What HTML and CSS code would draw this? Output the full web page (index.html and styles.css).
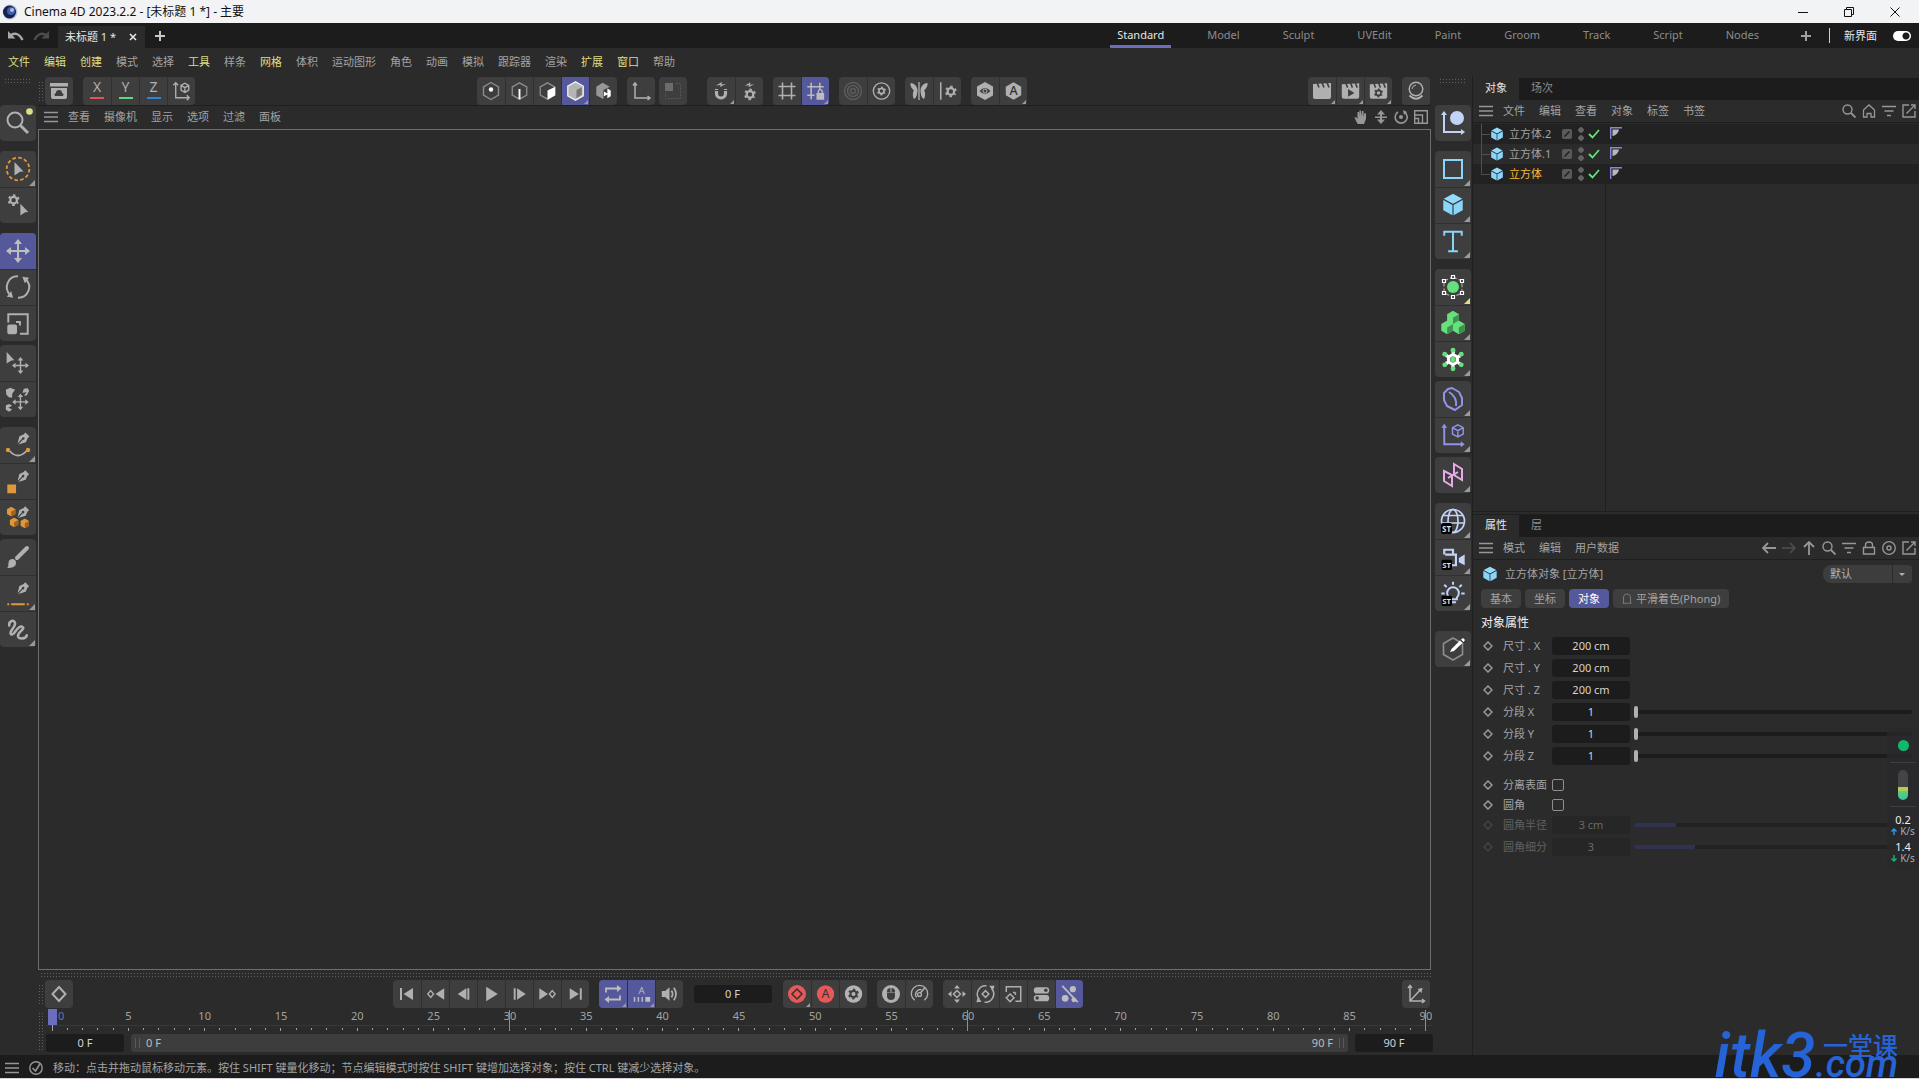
FILE: index.html
```html
<!DOCTYPE html>
<html lang="zh-CN">
<head>
    <meta charset="UTF-8">
    <meta name="viewport" content="width=device-width, initial-scale=1.0">
    <title>Cinema 4D 2023.2.2 - [未标题 1 *] - 主要</title>
    <link rel="stylesheet" href="styles.css">
</head>
<body>
    <!-- icon sprite -->
    <svg class="sprite" aria-hidden="true">
        <defs>
            <!-- shared shapes -->
            <symbol id="gear" viewBox="0 0 16 16">
                <circle cx="8" cy="8" r="4.2" fill="none" stroke="currentColor" stroke-width="2.8"/>
                <circle cx="8" cy="8" r="6.2" fill="none" stroke="currentColor" stroke-width="2.6" stroke-dasharray="3 3.49" stroke-dashoffset="1.5" transform="rotate(30 8 8)"/>
            </symbol>
            <symbol id="cube" viewBox="0 0 24 24">
                <path d="M12 1 21.5 6 12 11.2 2.5 6Z" fill="#93dbfd"/>
                <path d="M2 7.3 11.4 12.4V23L2 17.8ZM22 7.3 12.6 12.4V23L22 17.8Z" fill="#8ad6fb"/>
            </symbol>
            <symbol id="nib" viewBox="0 0 14 14">
                <path d="M9 .5 13.5 4.8 11.6 6.4 9.6 11 1.4 13.4 6.3 8.3A1.4 1.4 0 1 0 5.4 7.4L.6 12.5 2.6 4.6 7.4 2.4Z" fill="currentColor"/>
            </symbol>
            <symbol id="cross" viewBox="0 0 24 24">
                <path d="M12 2V22M2 12H22" stroke="currentColor" stroke-width="2"/>
                <path d="M12 0 16 5H8ZM12 24 8 19H16ZM0 12 5 8V16ZM24 12 19 16V8Z" fill="currentColor"/>
            </symbol>
            <symbol id="cursor" viewBox="0 0 10 14">
                <path d="M.5 0 9.5 9.5 6 9.8 .5 13.5Z" fill="currentColor"/>
            </symbol>
            <symbol id="hexa" viewBox="0 0 12 12">
                <path d="M6 0 11.2 3V9L6 12 .8 9V3Z" fill="#e0963b"/>
                <path d="M6 6 11.2 3V9L6 12Z" fill="#a0631c"/>
            </symbol>
            <symbol id="hexg" viewBox="0 0 12 12">
                <path d="M6 0 11.2 3V9L6 12 .8 9V3Z" fill="#66e07c"/>
                <path d="M6 6 11.2 3V9L6 12Z" fill="#3f9150"/>
            </symbol>

            <!-- 28px toolbar icons -->
            <symbol id="i-archive" viewBox="0 0 28 28"><path d="M5 6h18v3.500H5ZM6 11h16v9a2 2 0 0 1-2 2H8a2 2 0 0 1-2-2Z" fill="currentColor"/><path d="M10 19a2 2 0 0 1 1-3 3 3 0 0 1 6 0 2 2 0 0 1 1 3Z" fill="#3e3e3e"/></symbol>
            <symbol id="i-coord" viewBox="0 0 28 28"><g fill="none" stroke="currentColor" stroke-width="1.4"><path d="M8 5V21H22M5.500 8 8 5.500 10.500 8M19.500 18.500 22 21 19.500 23.500"/><path d="M17.500 6 21.500 8.300V13L17.500 15.500 13.500 13V8.300ZM13.500 8.300 17.500 10.500 21.500 8.300M17.500 10.500V15.500"/></g></symbol>
            <symbol id="i-point" viewBox="0 0 28 28"><path d="M14 5.500 21.500 9.800V18.200L14 22.500 6.500 18.200V9.800Z" fill="none" stroke="#8c8c8c" stroke-width="1.400"/><circle cx="14" cy="12.500" r="2.200" fill="#fff"/></symbol>
            <symbol id="i-edge" viewBox="0 0 28 28"><path d="M14 5.500 21.500 9.800V18.200L14 22.500 6.500 18.200V9.800Z" fill="none" stroke="#8c8c8c" stroke-width="1.400"/><path d="M14 12V22.500" stroke="#fff" stroke-width="2"/></symbol>
            <symbol id="i-poly" viewBox="0 0 28 28"><path d="M14 5.500 21.500 9.800V18.200L14 22.500 6.500 18.200V9.800Z" fill="none" stroke="#8c8c8c" stroke-width="1.400"/><path d="M14 13.500 22 9.500V18.500L14 23Z" fill="#fff"/></symbol>
            <symbol id="i-model" viewBox="0 0 28 28"><path d="M14 4.500 22 9V19L14 23.500 6 19V9Z" fill="#b4b4b4" stroke="#eee" stroke-width="1.400"/><path d="M15 13 20.500 10.200V18L15 21.500Z" fill="#777"/></symbol>
            <symbol id="i-uv" viewBox="0 0 28 28"><path d="M13 5.500 20.500 9.500 14 13V22.500L6.500 18.500V9.500Z" fill="#979797"/><path d="M18 11.500 21.500 13.500V19.500L18 21.500V17.500L14.500 19.500V14.500L18 16.500Z" fill="#fff"/></symbol>
            <symbol id="i-axis" viewBox="0 0 28 28"><path d="M8 6V21H23M6 8.500 8 6 10 8.500M20.500 19 23 21 20.500 23" fill="none" stroke="currentColor" stroke-width="1.500"/></symbol>
            <symbol id="i-plane" viewBox="0 0 28 28"><path d="M6 6h8v8H6Z" fill="#6c6c6c"/><path d="M17 6.500H21.500V21.500H6.500V16" fill="none" stroke="#555" stroke-dasharray="2 1"/></symbol>
            <symbol id="i-magnet" viewBox="0 0 28 28"><path d="M9.500 12V16.500A4.500 4.500 0 0 0 18.500 16.500V12" fill="none" stroke="currentColor" stroke-width="3.200"/><path d="M7.500 13.500H20.500" stroke="#3e3e3e"/><path d="M9 8.500 15 5 14.500 7.500 19 7 13 10 13.500 8Z" fill="currentColor"/></symbol>
            <symbol id="i-snapgear" viewBox="0 0 28 28"><use href="#gear" x="8" y="11" width="13" height="13"/><path d="M9 8.500 15 5 14.500 7.500 19 7 13 10 13.500 8Z" fill="currentColor"/></symbol>
            <symbol id="i-grid" viewBox="0 0 28 28"><path d="M9.500 5.500V22.500M18.500 5.500V22.500M5.500 9.500H22.500M5.500 18.500H22.500" stroke="currentColor" stroke-width="1.600"/></symbol>
            <symbol id="i-gridlock" viewBox="0 0 28 28"><path d="M9.500 5.500V22.500M18.500 5.500V12M5.500 9.500H22.500M5.500 18.500H13" stroke="currentColor" stroke-width="1.600"/><path d="M15 16h8v7h-8Z" fill="currentColor"/><path d="M17 16V14.500a2 2 0 0 1 4 0V16" fill="none" stroke="currentColor" stroke-width="1.400"/></symbol>
            <symbol id="i-rings" viewBox="0 0 28 28"><g fill="none" stroke="#5b5b5b" stroke-width="1.500"><circle cx="14" cy="14" r="8.500"/><circle cx="14" cy="14" r="5.500"/><circle cx="14" cy="14" r="2.500"/></g></symbol>
            <symbol id="i-ringgear" viewBox="0 0 28 28"><circle cx="14" cy="14" r="8.500" fill="none" stroke="currentColor" stroke-width="1.400"/><use href="#gear" x="9" y="9" width="10" height="10"/></symbol>
            <symbol id="i-mirror" viewBox="0 0 28 28"><path d="M14 5V23" stroke="currentColor" stroke-width="1.300"/><path d="M12.500 13C12 9 9 6 5.500 6 5 9 7 12 9 13.500 7.500 14.500 7.500 20 9 22 11.500 21 12.500 17 12.500 13ZM15.500 13C16 9 19 6 22.500 6 23 9 21 12 19 13.500 20.500 14.500 20.500 20 19 22 16.500 21 15.500 17 15.500 13Z" fill="currentColor"/></symbol>
            <symbol id="i-linegear" viewBox="0 0 28 28"><path d="M7 5V23" stroke="currentColor" stroke-width="1.600"/><use href="#gear" x="11" y="8" width="13" height="13"/></symbol>
            <symbol id="i-hexeye" viewBox="0 0 28 28"><path d="M14 5 22 9.500V18.500L14 23 6 18.500V9.500Z" fill="currentColor"/><path d="M8.500 14Q14 8 19.500 14 14 20 8.500 14Z" fill="#3e3e3e"/><circle cx="14" cy="14" r="2" fill="none" stroke="#b0b0b0"/></symbol>
            <symbol id="i-hexa" viewBox="0 0 28 28"><path d="M14 5 22 9.500V18.500L14 23 6 18.500V9.500Z" fill="currentColor"/><text x="14" y="18.500" text-anchor="middle" font-size="13" font-weight="500" fill="#333">A</text></symbol>
            <symbol id="i-clap" viewBox="0 0 28 28"><path d="M5 7 23 6V12H5Z" fill="currentColor"/><path d="M9 5.500 11 10.500M14 5.500 16 10.500M19 5.500 21 10.500" stroke="#3e3e3e" stroke-width="1.600"/><path d="M5 11H23V20a2 2 0 0 1-2 2H7a2 2 0 0 1-2-2Z" fill="currentColor"/></symbol>
            <symbol id="i-clapplay" viewBox="0 0 28 28"><use href="#i-clap"/><path d="M11.500 12 18 16 11.500 20Z" fill="#3e3e3e"/></symbol>
            <symbol id="i-clapgear" viewBox="0 0 28 28"><use href="#i-clap"/><use href="#gear" x="9" y="11" width="10" height="10" color="#3e3e3e"/></symbol>
            <symbol id="i-ball" viewBox="0 0 28 28"><g fill="none" stroke="currentColor" stroke-width="1.400"><circle cx="14" cy="12" r="6.800"/><path d="M10 12A4.500 4.500 0 0 1 14 8" stroke-width="1"/><path d="M7.500 18.500Q14 25 20.500 18.500" stroke-width="2"/></g></symbol>
            <symbol id="i-key" viewBox="0 0 28 28"><path d="M14 7 20.500 14 14 21 7.500 14Z" fill="none" stroke="currentColor" stroke-width="2"/></symbol>

            <!-- transport -->
            <symbol id="t-start" viewBox="0 0 28 28"><path d="M7 8h2v12H7ZM20 8V20L10.500 14Z" fill="currentColor"/></symbol>
            <symbol id="t-prevkey" viewBox="0 0 28 28"><path d="M23 8V20L14 14Z" fill="currentColor"/><path d="M9 10.500 12 14 9 17.500 6 14Z" fill="none" stroke="currentColor" stroke-width="1.400"/></symbol>
            <symbol id="t-prev" viewBox="0 0 28 28"><path d="M17 8V20L8 14ZM18 8h2v12h-2Z" fill="currentColor"/></symbol>
            <symbol id="t-play" viewBox="0 0 28 28"><path d="M8.500 6.500V21.500L20.500 14Z" fill="currentColor"/></symbol>
            <symbol id="t-next" viewBox="0 0 28 28"><path d="M8 8h2v12H8ZM11.500 8 20.500 14 11.500 20Z" fill="currentColor"/></symbol>
            <symbol id="t-nextkey" viewBox="0 0 28 28"><path d="M5.500 8 14.500 14 5.500 20Z" fill="currentColor"/><path d="M19 10.500 22 14 19 17.500 16 14Z" fill="none" stroke="currentColor" stroke-width="1.400"/></symbol>
            <symbol id="t-end" viewBox="0 0 28 28"><path d="M8 8 17.500 14 8 20ZM18.500 8h2v12h-2Z" fill="currentColor"/></symbol>
            <symbol id="t-loop" viewBox="0 0 28 28"><g fill="none" stroke="currentColor" stroke-width="1.800"><path d="M7 12.500V8.500H19M21 15.500V19.500H9"/></g><path d="M18 5 22.500 8.500 18 12ZM10 16 5.500 19.500 10 23Z" fill="currentColor"/></symbol>
            <symbol id="t-autoframes" viewBox="0 0 28 28"><text x="14" y="14" text-anchor="middle" font-size="10" fill="currentColor">A</text><path d="M6 17h1.500v5H6ZM10 17h1.500v5H10ZM14 17h1.500v5H14ZM18 17h5v5h-5Z" fill="currentColor"/></symbol>
            <symbol id="t-sound" viewBox="0 0 28 28"><path d="M6 11H9.500L14 7V21L9.500 17H6Z" fill="currentColor"/><path d="M16 10.500Q18.500 14 16 17.500M18.500 7.500Q23 14 18.500 20.500" fill="none" stroke="currentColor" stroke-width="1.800"/></symbol>
            <symbol id="t-rec" viewBox="0 0 28 28"><circle cx="14" cy="14" r="9" fill="#e55959"/><path d="M14 9 19 14 14 19 9 14Z" fill="none" stroke="#3e3030" stroke-width="1.500"/></symbol>
            <symbol id="t-auto" viewBox="0 0 28 28"><circle cx="14" cy="14" r="9" fill="#e55959"/><text x="14" y="18.500" text-anchor="middle" font-size="13" fill="#3e3030">A</text></symbol>
            <symbol id="t-gear" viewBox="0 0 28 28"><circle cx="14" cy="14" r="9" fill="#b4b4b4"/><use href="#gear" x="8" y="8" width="12" height="12" color="#3e3e3e"/></symbol>
            <symbol id="t-mouse" viewBox="0 0 28 28"><circle cx="14" cy="14" r="9" fill="currentColor"/><path d="M10 12.500H18V16a4 4 0 0 1-8 0ZM10 12V11a3.500 3.500 0 0 1 3.500-3V12ZM14.500 12V8A3.500 3.500 0 0 1 18 11V12Z" fill="#3e3e3e"/></symbol>
            <symbol id="t-speed" viewBox="0 0 28 28"><path d="M9 20.500A8.500 8.500 0 1 1 19 20.500M11 17.500A5 5 0 0 1 16 9.500" fill="none" stroke="currentColor" stroke-width="1.400"/><path d="M14 14 20 7" stroke="currentColor" stroke-width="1.600"/><circle cx="14" cy="14.500" r="2" fill="#3e3e3e" stroke="currentColor" stroke-width="1.400"/></symbol>
            <symbol id="t-pos" viewBox="0 0 28 28"><path d="M14 5 17 8.500H11ZM14 23 11 19.500H17ZM5 14 8.500 11V17ZM23 14 19.500 17V11Z" fill="currentColor"/><path d="M14 10.500 17.500 14 14 17.500 10.500 14Z" fill="none" stroke="currentColor" stroke-width="1.500"/></symbol>
            <symbol id="t-rot" viewBox="0 0 28 28"><path d="M7.500 19.500A8.500 8.500 0 0 1 15 5.600M20.500 8.500A8.500 8.500 0 0 1 13 22.400M14 10.500 17.500 14 14 17.500 10.500 14Z" fill="none" stroke="currentColor" stroke-width="1.500"/><path d="M18 5.500h5.500L21.500 11ZM4.500 22.500 6 17 10 22Z" fill="currentColor"/></symbol>
            <symbol id="t-scl" viewBox="0 0 28 28"><path d="M6.500 12V6.500H21.500V21.500H16M16 12.500H13.500M16 12.500V15M10.500 14 14.500 18 10.500 22 6.500 18Z" fill="none" stroke="currentColor" stroke-width="1.500"/></symbol>
            <symbol id="t-param" viewBox="0 0 28 28"><rect x="6" y="7" width="16" height="6.500" rx="3.200" fill="currentColor"/><rect x="6" y="15" width="16" height="6.500" rx="3.200" fill="currentColor"/><circle cx="18.500" cy="10.200" r="1.800" fill="#3e3e3e"/><circle cx="9.500" cy="18.200" r="1.800" fill="#3e3e3e"/></symbol>
            <symbol id="t-pla" viewBox="0 0 28 28"><path d="M6.500 5.500 22.500 22.500" stroke="currentColor" stroke-width="1.800"/><circle cx="17.500" cy="9" r="3.200" fill="currentColor"/><circle cx="9.500" cy="18.500" r="3.500" fill="currentColor"/><circle cx="18.500" cy="20" r="2.500" fill="currentColor"/></symbol>
            <symbol id="t-curve" viewBox="0 0 28 28"><path d="M8 6V21H22M8 21 19 9M6 8 8 5.500 10 8M20 19 22.500 21 20 23" fill="none" stroke="currentColor" stroke-width="1.500"/><path d="M15.500 9 20.500 8 19.500 13Z" fill="currentColor"/></symbol>

            <!-- 36px side icons -->
            <symbol id="s-search" viewBox="0 0 36 36"><circle cx="15" cy="15" r="7.500" fill="none" stroke="currentColor" stroke-width="2"/><path d="M20.500 20.500 28 28" stroke="currentColor" stroke-width="3"/><circle cx="29.500" cy="6.500" r="3.300" fill="#dede85"/></symbol>
            <symbol id="s-live" viewBox="0 0 36 36"><circle cx="18" cy="18" r="11.300" fill="none" stroke="#e0963b" stroke-width="1.800" stroke-dasharray="3.600 2.300"/><use href="#cursor" x="14" y="11" width="10" height="14"/></symbol>
            <symbol id="s-gearcur" viewBox="0 0 36 36"><use href="#gear" x="7" y="6" width="13" height="13"/><use href="#cursor" x="20" y="16" width="9" height="13"/></symbol>
            <symbol id="s-move" viewBox="0 0 36 36"><use href="#cross" x="6" y="6" width="24" height="24"/></symbol>
            <symbol id="s-rotate" viewBox="0 0 36 36"><path d="M10 25.500A11 11 0 0 1 18 6.500M26 9.500A11 11 0 0 1 18 28.500" fill="none" stroke="currentColor" stroke-width="2"/><path d="M22.500 7 29.500 8 25 13.500ZM6.500 27.500 11 21.500 13 28.500Z" fill="currentColor"/></symbol>
            <symbol id="s-scale" viewBox="0 0 36 36"><path d="M8 17V8.500H28V28.500H20M16 16.500H20V20" fill="none" stroke="currentColor" stroke-width="2"/><rect x="7" y="19" width="10" height="10" rx="2" fill="currentColor"/></symbol>
            <symbol id="s-curmove" viewBox="0 0 36 36"><use href="#cursor" x="6" y="7" width="9" height="12"/><use href="#cross" x="12" y="12" width="17" height="17"/></symbol>
            <symbol id="s-ptsmove" viewBox="0 0 36 36"><g fill="currentColor"><path d="M5.500 8 10 6 15 8 12 12 12 16 9 16 6 13ZM24 7 28 6.500 29.500 9 27 14 24 14 27 10.500 22.500 11ZM5.500 24 9 22.500 12 24.500 8 26.500 12 28 9 30.500 5.500 28.500Z"/></g><use href="#cross" x="12" y="12" width="17" height="17"/></symbol>
            <symbol id="s-spline" viewBox="0 0 36 36"><use href="#nib" x="17" y="5" width="13" height="13"/><path d="M9.500 24Q18 33 26.500 24" fill="none" stroke="currentColor" stroke-width="1.800"/><g fill="#e0963b"><circle cx="8" cy="23" r="2.200"/><circle cx="28" cy="23" r="2.200"/></g></symbol>
            <symbol id="s-pensq" viewBox="0 0 36 36"><use href="#nib" x="17" y="6" width="13" height="13"/><path d="M7 21h9v9H7Z" fill="#e0963b"/></symbol>
            <symbol id="s-penhex" viewBox="0 0 36 36"><use href="#nib" x="17" y="6" width="13" height="13"/><use href="#hexa" x="6" y="7" width="10" height="10"/><use href="#hexa" x="9" y="18" width="10" height="10"/><use href="#hexa" x="20" y="19" width="10" height="10"/></symbol>
            <symbol id="s-brush" viewBox="0 0 36 36"><path d="M27 9 17 19" stroke="currentColor" stroke-width="4" stroke-linecap="round"/><path d="M12 20a4 4 0 0 1 4 4c0 4-4 5-9 5 2-1 1-3 1.500-5A4 4 0 0 1 12 20Z" fill="currentColor"/></symbol>
            <symbol id="s-penline" viewBox="0 0 36 36"><use href="#nib" x="17" y="6" width="13" height="13"/><path d="M7 29h2M11 29H25M27 29h2" stroke="#e0963b" stroke-width="2"/></symbol>
            <symbol id="s-squig" viewBox="0 0 36 36"><path d="M9 14C8 9 15 7 15 12 15 16 8 21 11 23 14 25 17 14 22 15 27 17 17 21 18 25 19 28 26 28 27 24" fill="none" stroke="currentColor" stroke-width="2.600" stroke-linecap="round"/></symbol>
            <symbol id="s-null" viewBox="0 0 36 36"><path d="M9 8V27H28" fill="none" stroke="#c3d3f6" stroke-width="2"/><path d="M9 6 12 10H6ZM30 27 26 30V24Z" fill="#c3d3f6"/><circle cx="22" cy="13" r="7" fill="#c3d3f6"/></symbol>
            <symbol id="s-rect" viewBox="0 0 36 36"><path d="M9 9H27V27H9Z" fill="none" stroke="#8ad6fb" stroke-width="2"/></symbol>
            <symbol id="s-cube" viewBox="0 0 36 36"><use href="#cube" x="6" y="5" width="24" height="24"/></symbol>
            <symbol id="s-type" viewBox="0 0 36 36"><path d="M9 12V8H27V12M18 8V28M13 28H23" fill="none" stroke="#8ad6fb" stroke-width="2"/></symbol>
            <symbol id="s-subdiv" viewBox="0 0 36 36"><circle cx="18" cy="18" r="6" fill="#66e07c"/><path d="M18 8 27 12V24L18 28 9 24V12Z" fill="none" stroke="#aaa" stroke-width="1.200" stroke-dasharray="4 2"/><g fill="#3e3e3e" stroke="#fff" stroke-width="1.200"><path d="M16.500 6.500h3v3h-3ZM25.500 10.500h3v3h-3ZM25.500 22.500h3v3h-3ZM16.500 26.500h3v3h-3ZM7.500 22.500h3v3h-3ZM7.500 10.500h3v3h-3Z"/></g></symbol>
            <symbol id="s-cloner" viewBox="0 0 36 36"><use href="#hexg" x="11" y="5" width="14" height="14"/><use href="#hexg" x="5" y="15" width="14" height="14"/><use href="#hexg" x="17" y="15" width="14" height="14"/></symbol>
            <symbol id="s-fields" viewBox="0 0 36 36"><use href="#gear" x="9" y="9" width="18" height="18" color="#fff"/><g fill="#66e07c"><circle cx="18" cy="18" r="2.800"/><circle cx="18" cy="8.500" r="2.500"/><circle cx="26.500" cy="12.500" r="2.500"/><circle cx="26.500" cy="23.500" r="2.500"/><circle cx="18" cy="27.500" r="2.500"/><circle cx="9.500" cy="23.500" r="2.500"/><circle cx="9.500" cy="12.500" r="2.500"/></g></symbol>
            <symbol id="s-bend" viewBox="0 0 36 36"><path d="M9 12 13 8 17 7 24 11 27 17V24L20 29 12 25 9 19ZM14 11C19 14 22 18 21 25" fill="none" stroke="#9192ea" stroke-width="2" stroke-linejoin="round"/></symbol>
            <symbol id="s-axcube" viewBox="0 0 36 36"><g fill="none" stroke="#9192ea"><path d="M9 8V27H28" stroke-width="2"/><path d="M23 7 28.500 10V16.500L23 19.500 17.500 16.500V10ZM17.500 10 23 13 28.500 10M23 13V19.500" stroke-width="1.500"/></g><path d="M9 6 12 10H6ZM30 27 26 30V24Z" fill="#9192ea"/></symbol>
            <symbol id="s-sym" viewBox="0 0 36 36"><path d="M9 14 17 18V29L9 24ZM19 7 27 12V23L19 18ZM13 21 23 15" fill="none" stroke="#e9a9e8" stroke-width="2"/></symbol>
            <symbol id="st" viewBox="0 0 11 11"><rect width="11" height="11" rx="2" fill="#000"/><text x="5.500" y="8.800" text-anchor="middle" font-size="8" font-weight="700" fill="#ddd">ST</text></symbol>
            <symbol id="s-globe" viewBox="0 0 36 36"><g fill="none" stroke="#c3d3f6" stroke-width="1.700"><circle cx="18" cy="18" r="11.500"/><ellipse cx="18" cy="18" rx="5" ry="11.500"/><path d="M8 12.500H28M6.500 20H29.500"/></g><use href="#st" x="6" y="20" width="11" height="11"/></symbol>
            <symbol id="s-camera" viewBox="0 0 36 36"><path d="M9 15V10H18V14M10 15H21V26H14" fill="none" stroke="#c3d3f6" stroke-width="2.200"/><path d="M24 18.500 30 15V26L24 23Z" fill="#c3d3f6"/><use href="#st" x="6" y="20" width="11" height="11"/></symbol>
            <symbol id="s-light" viewBox="0 0 36 36"><g fill="none" stroke="#c3d3f6" stroke-width="2"><path d="M14 22A6 6 0 1 1 22 22V24H16M15 27H21M18 6V9M9 9 11.500 11.500M27 9 24.500 11.500M6 18H9.500M26.500 18H30"/></g><use href="#st" x="6" y="20" width="11" height="11"/></symbol>
            <symbol id="s-edit" viewBox="0 0 36 36"><path d="M18 7 27.500 12.500V23.500L18 29 8.500 23.500V12.500Z" fill="none" stroke="#8c8c8c" stroke-width="1.700"/><path d="M15 21 16.500 18 25 9.500 27.500 12 19 20 15 21ZM26 8.500 28 7 30 9 28.500 11Z" fill="#fff"/></symbol>

            <!-- 14px panel icons -->
            <symbol id="p-burger" viewBox="0 0 14 14"><path d="M0 2.500H14M0 7H14M0 11.500H14" stroke="currentColor" stroke-width="1.600"/></symbol>
            <symbol id="p-search" viewBox="0 0 14 14"><circle cx="5.500" cy="5.500" r="4.500" fill="none" stroke="currentColor" stroke-width="1.400"/><path d="M9 9 13.500 13.500" stroke="currentColor" stroke-width="1.800"/></symbol>
            <symbol id="p-home" viewBox="0 0 14 14"><path d="M1.500 13V6L7 1 12.500 6V13H9V9.500H5V13Z" fill="none" stroke="currentColor" stroke-width="1.300"/></symbol>
            <symbol id="p-filter" viewBox="0 0 14 14"><path d="M0 2.500H14M2.500 7H11.500M5 11.500H9" stroke="currentColor" stroke-width="1.500"/></symbol>
            <symbol id="p-ext" viewBox="0 0 14 14"><path d="M7 1H1V13H13V7M4.500 9.500 12 2M9 1H13V5" fill="none" stroke="currentColor" stroke-width="1.400"/></symbol>
            <symbol id="p-left" viewBox="0 0 14 14"><path d="M6 2 1 7 6 12M1 7H14" fill="none" stroke="currentColor" stroke-width="1.800"/></symbol>
            <symbol id="p-right" viewBox="0 0 14 14"><path d="M8 2 13 7 8 12M13 7H0" fill="none" stroke="currentColor" stroke-width="1.500"/></symbol>
            <symbol id="p-up" viewBox="0 0 14 14"><path d="M2 6 7 1 12 6M7 1V14" fill="none" stroke="currentColor" stroke-width="1.800"/></symbol>
            <symbol id="p-lock" viewBox="0 0 14 14"><path d="M1.500 6.500H12.500V13H1.500ZM3.500 6.500V4a3.500 3 0 0 1 7 0V6.500" fill="none" stroke="currentColor" stroke-width="1.400"/></symbol>
            <symbol id="p-target" viewBox="0 0 14 14"><circle cx="7" cy="7" r="6.300" fill="none" stroke="currentColor" stroke-width="1.300"/><circle cx="7" cy="7" r="2" fill="none" stroke="currentColor" stroke-width="1.400"/></symbol>
            <symbol id="p-hand" viewBox="0 0 14 14"><path d="M3 13 .5 7.500 2 7 3.500 9V2H5V6.500L5.500.5H7V6.500L8 1H9.500V7L10.500 3 12 3.500V9L10 14H4Z" fill="currentColor"/></symbol>
            <symbol id="p-dolly" viewBox="0 0 14 14"><path d="M7 0 11 4.500H8V6.500H13V8H8V9.500H11L7 14 3 9.500H6V8H1V6.500H6V4.500H3Z" fill="currentColor"/></symbol>
            <symbol id="p-orbit" viewBox="0 0 14 14"><path d="M4 2A6 6 0 1 0 10 1.800" fill="none" stroke="currentColor" stroke-width="1.600"/><path d="M9 0 13 2 10 5Z" fill="currentColor"/><circle cx="7" cy="7" r="2" fill="currentColor"/></symbol>
            <symbol id="p-max" viewBox="0 0 14 14"><path d="M.7.7H13.300V13.300H.7ZM.7 5H8.500V13.300M4.500 13.300V8.500H.7" fill="none" stroke="currentColor" stroke-width="1.400"/></symbol>
            <symbol id="p-undo" viewBox="0 0 16 12"><path d="M3 5Q10 1 14.500 10" fill="none" stroke="currentColor" stroke-width="2.400"/><path d="M0 1V8.500H7.500Z" fill="currentColor"/></symbol>
            <symbol id="p-diamond" viewBox="0 0 10 10"><path d="M5 1 9 5 5 9 1 5Z" fill="none" stroke="currentColor" stroke-width="1.500"/></symbol>
            <symbol id="p-check" viewBox="0 0 12 10"><path d="M1 5 4.500 8.500 11 1" fill="none" stroke="#66e07c" stroke-width="1.800"/></symbol>
            <symbol id="p-layer" viewBox="0 0 10 10"><rect width="10" height="10" rx="2" fill="#5a5a5a"/><path d="M2.500 7.500 7.500 2.500" stroke="#222" stroke-width="1.600"/></symbol>
            <symbol id="p-tag" viewBox="0 0 12 12"><path d="M.7 12V.7H12" fill="none" stroke="#8486d8" stroke-width="1.400"/><path d="M2.500 2.500H9C8.500 5.500 6 8.500 2.500 9Z" fill="#b8b8b8"/></symbol>
            <symbol id="p-phong" viewBox="0 0 10 11"><path d="M.5 10.300H9.500M1.500 10V5a3.500 4 0 0 1 7 0V10" fill="none" stroke="#777" stroke-width="1.100"/></symbol>
            <symbol id="p-ok" viewBox="0 0 14 14"><circle cx="7" cy="7" r="6.200" fill="none" stroke="currentColor" stroke-width="1.400"/><path d="M3.500 7 6.500 10 11.500 2" fill="none" stroke="currentColor" stroke-width="1.500"/></symbol>
        </defs>
    </svg>

    <header class="titlebar">
        <svg class="app-icon" viewBox="0 0 16 16"><circle cx="8" cy="8" r="7.500" fill="#bfc6d8"/><circle cx="7.500" cy="8" r="6.500" fill="#14204d"/><circle cx="9" cy="7" r="4" fill="#3e5fa8"/><circle cx="10" cy="6" r="2" fill="#a9bde6"/></svg>
        <h1 class="app-title">Cinema 4D 2023.2.2 - [未标题 1 *] - 主要</h1>
        <div class="window-controls">
            <button aria-label="最小化"><svg viewBox="0 0 10 10"><path d="M0 5.500H10" stroke="#111"/></svg></button>
            <button aria-label="还原"><svg viewBox="0 0 10 10"><path d="M.5 2.500H7.500V9.500H.5ZM2.500 2V.5H9.500V7.500H8" fill="none" stroke="#111"/></svg></button>
            <button aria-label="关闭"><svg viewBox="0 0 10 10"><path d="M.5.5 9.500 9.500M9.500.5.5 9.500" stroke="#111"/></svg></button>
        </div>
    </header>

    <div class="docbar">
        <button class="history" aria-label="撤销"><svg><use href="#p-undo"/></svg></button>
        <button class="history redo" aria-label="重做" disabled><svg><use href="#p-undo"/></svg></button>
        <div class="doc-tab"><span>未标题 1 *</span><button class="tab-close" aria-label="关闭标签"><svg viewBox="0 0 8 8"><path d="M1 1 7 7M7 1 1 7" stroke="currentColor" stroke-width="1.600"/></svg></button></div>
        <button class="plus" aria-label="新建"><svg viewBox="0 0 10 10"><path d="M5 0V10M0 5H10" stroke="currentColor" stroke-width="2"/></svg></button>
        <nav class="layouts">
            <button class="active">Standard</button>
            <button>Model</button>
            <button>Sculpt</button>
            <button>UVEdit</button>
            <button>Paint</button>
            <button>Groom</button>
            <button>Track</button>
            <button>Script</button>
            <button>Nodes</button>
        </nav>
        <button class="plus dim" aria-label="添加布局"><svg viewBox="0 0 10 10"><path d="M5 0V10M0 5H10" stroke="currentColor" stroke-width="2"/></svg></button>
        <label class="new-ui">新界面 <input type="checkbox" class="switch" checked></label>
    </div>

    <nav class="menubar">
        <button class="hl">文件</button>
        <button class="hl">编辑</button>
        <button class="hl">创建</button>
        <button>模式</button>
        <button>选择</button>
        <button class="hl">工具</button>
        <button>样条</button>
        <button class="hl">网格</button>
        <button>体积</button>
        <button>运动图形</button>
        <button>角色</button>
        <button>动画</button>
        <button>模拟</button>
        <button>跟踪器</button>
        <button>渲染</button>
        <button class="hl">扩展</button>
        <button class="hl">窗口</button>
        <button>帮助</button>
    </nav>

    <main class="main">
        <div class="work">
            <div class="toolbar">
                <div class="grip-h"></div>
                <div class="grip-v"></div>
                <div class="toolbar-part">
                    <div class="group"><button class="tool" aria-label="资产"><svg><use href="#i-archive"/></svg></button></div>
                    <div class="group">
                        <button class="tool axis x">X</button>
                        <button class="tool axis y">Y</button>
                        <button class="tool axis z">Z</button>
                        <button class="tool" aria-label="坐标系统"><svg><use href="#i-coord"/></svg></button>
                    </div>
                </div>
                <div class="toolbar-part mid">
                    <div class="group">
                        <button class="tool" aria-label="点"><svg><use href="#i-point"/></svg></button>
                        <button class="tool" aria-label="边"><svg><use href="#i-edge"/></svg></button>
                        <button class="tool" aria-label="多边形"><svg><use href="#i-poly"/></svg></button>
                        <button class="tool on more" aria-label="模型"><svg><use href="#i-model"/></svg></button>
                        <button class="tool" aria-label="纹理"><svg><use href="#i-uv"/></svg></button>
                    </div>
                    <div class="group"><button class="tool" aria-label="启用轴心"><svg><use href="#i-axis"/></svg></button></div>
                    <div class="group near"><button class="tool" aria-label="视窗独显"><svg><use href="#i-plane"/></svg></button></div>
                    <div class="group far">
                        <button class="tool more" aria-label="捕捉"><svg><use href="#i-magnet"/></svg></button>
                        <button class="tool" aria-label="捕捉设置"><svg><use href="#i-snapgear"/></svg></button>
                    </div>
                    <div class="group">
                        <button class="tool" aria-label="工作平面"><svg><use href="#i-grid"/></svg></button>
                        <button class="tool on more" aria-label="锁定工作平面"><svg><use href="#i-gridlock"/></svg></button>
                    </div>
                    <div class="group">
                        <button class="tool" aria-label="软选择"><svg><use href="#i-rings"/></svg></button>
                        <button class="tool" aria-label="软选择设置"><svg><use href="#i-ringgear"/></svg></button>
                    </div>
                    <div class="group">
                        <button class="tool" aria-label="对称"><svg><use href="#i-mirror"/></svg></button>
                        <button class="tool" aria-label="对称设置"><svg><use href="#i-linegear"/></svg></button>
                    </div>
                    <div class="group">
                        <button class="tool" aria-label="视窗单体"><svg><use href="#i-hexeye"/></svg></button>
                        <button class="tool more" aria-label="自动单体"><svg><use href="#i-hexa"/></svg></button>
                    </div>
                </div>
                <div class="toolbar-part end">
                    <div class="group">
                        <button class="tool more" aria-label="渲染活动视图"><svg><use href="#i-clap"/></svg></button>
                        <button class="tool more" aria-label="渲染到图像查看器"><svg><use href="#i-clapplay"/></svg></button>
                        <button class="tool more" aria-label="编辑渲染设置"><svg><use href="#i-clapgear"/></svg></button>
                    </div>
                    <div class="group"><button class="tool" aria-label="材质"><svg><use href="#i-ball"/></svg></button></div>
                </div>
                <div class="grip-h"></div>
            </div>

            <div class="stage">
                <aside class="side-tools">
                    <div class="group"><button class="tool" aria-label="搜索"><svg><use href="#s-search"/></svg></button></div>
                    <div class="group">
                        <button class="tool more" aria-label="实时选择"><svg><use href="#s-live"/></svg></button>
                        <button class="tool" aria-label="选择设置"><svg><use href="#s-gearcur"/></svg></button>
                    </div>
                    <div class="group">
                        <button class="tool on" aria-label="移动"><svg><use href="#s-move"/></svg></button>
                        <button class="tool" aria-label="旋转"><svg><use href="#s-rotate"/></svg></button>
                        <button class="tool" aria-label="缩放"><svg><use href="#s-scale"/></svg></button>
                    </div>
                    <div class="group near">
                        <button class="tool" aria-label="放置"><svg><use href="#s-curmove"/></svg></button>
                        <button class="tool" aria-label="动态放置"><svg><use href="#s-ptsmove"/></svg></button>
                    </div>
                    <div class="group">
                        <button class="tool more" aria-label="样条画笔"><svg><use href="#s-spline"/></svg></button>
                        <button class="tool" aria-label="多边形画笔"><svg><use href="#s-pensq"/></svg></button>
                        <button class="tool" aria-label="体积画笔"><svg><use href="#s-penhex"/></svg></button>
                    </div>
                    <div class="group near">
                        <button class="tool" aria-label="笔刷"><svg><use href="#s-brush"/></svg></button>
                        <button class="tool more" aria-label="涂鸦"><svg><use href="#s-penline"/></svg></button>
                        <button class="tool more" aria-label="草绘"><svg><use href="#s-squig"/></svg></button>
                    </div>
                </aside>

                <div class="center">
                    <div class="view-menu">
                        <svg class="ico"><use href="#p-burger"/></svg>
                        <button>查看</button>
                        <button>摄像机</button>
                        <button>显示</button>
                        <button>选项</button>
                        <button>过滤</button>
                        <button>面板</button>
                        <div class="icons">
                            <svg class="ico"><use href="#p-hand"/></svg>
                            <svg class="ico"><use href="#p-dolly"/></svg>
                            <svg class="ico"><use href="#p-orbit"/></svg>
                            <svg class="ico"><use href="#p-max"/></svg>
                        </div>
                    </div>
                    <div class="viewport"></div>

                    <section class="timeline">
                        <div class="grip-wide"></div>
                        <div class="transport">
                            <div class="grip-v"></div>
                            <div class="group"><button class="tool" aria-label="关键帧"><svg><use href="#i-key"/></svg></button></div>
                            <div class="transport-mid">
                                <div class="group">
                                    <button class="tool" aria-label="转到开始"><svg><use href="#t-start"/></svg></button>
                                    <button class="tool" aria-label="上一关键帧"><svg><use href="#t-prevkey"/></svg></button>
                                    <button class="tool" aria-label="上一帧"><svg><use href="#t-prev"/></svg></button>
                                    <button class="tool" aria-label="播放"><svg><use href="#t-play"/></svg></button>
                                    <button class="tool" aria-label="下一帧"><svg><use href="#t-next"/></svg></button>
                                    <button class="tool" aria-label="下一关键帧"><svg><use href="#t-nextkey"/></svg></button>
                                    <button class="tool" aria-label="转到结束"><svg><use href="#t-end"/></svg></button>
                                </div>
                                <div class="group">
                                    <button class="tool on more" aria-label="循环"><svg><use href="#t-loop"/></svg></button>
                                    <button class="tool on more" aria-label="全部帧"><svg><use href="#t-autoframes"/></svg></button>
                                    <button class="tool" aria-label="声音"><svg><use href="#t-sound"/></svg></button>
                                </div>
                                <input class="field now" type="text" value="0 F" aria-label="当前帧">
                                <div class="group">
                                    <button class="tool more" aria-label="记录"><svg><use href="#t-rec"/></svg></button>
                                    <button class="tool" aria-label="自动关键帧"><svg><use href="#t-auto"/></svg></button>
                                    <button class="tool" aria-label="关键帧设置"><svg><use href="#t-gear"/></svg></button>
                                </div>
                                <div class="group">
                                    <button class="tool" aria-label="鼠标记录"><svg><use href="#t-mouse"/></svg></button>
                                    <button class="tool" aria-label="速率"><svg><use href="#t-speed"/></svg></button>
                                </div>
                                <div class="group">
                                    <button class="tool" aria-label="位置"><svg><use href="#t-pos"/></svg></button>
                                    <button class="tool" aria-label="旋转"><svg><use href="#t-rot"/></svg></button>
                                    <button class="tool" aria-label="缩放"><svg><use href="#t-scl"/></svg></button>
                                    <button class="tool" aria-label="参数"><svg><use href="#t-param"/></svg></button>
                                    <button class="tool on" aria-label="点级别动画"><svg><use href="#t-pla"/></svg></button>
                                </div>
                            </div>
                            <div class="group"><button class="tool" aria-label="函数曲线"><svg><use href="#t-curve"/></svg></button></div>
                        </div>
                        <div class="frames">
                            <div class="grip-v"></div>
                            <div class="frames-body">
                                <div class="ruler" id="ruler"></div>
                                <div class="range">
                                    <input class="field" type="text" value="0 F" aria-label="起始帧">
                                    <div class="range-bar"><i></i><span>0 F</span><span class="last">90 F</span><i></i></div>
                                    <input class="field" type="text" value="90 F" aria-label="结束帧">
                                </div>
                            </div>
                        </div>
                    </section>
                </div>

                <aside class="side-tools right">
                    <div class="group"><button class="tool" aria-label="空白"><svg><use href="#s-null"/></svg></button></div>
                    <div class="group">
                        <button class="tool more" aria-label="矩形"><svg><use href="#s-rect"/></svg></button>
                        <button class="tool more" aria-label="立方体"><svg><use href="#s-cube"/></svg></button>
                        <button class="tool more" aria-label="文本"><svg><use href="#s-type"/></svg></button>
                    </div>
                    <div class="group">
                        <button class="tool more warm" aria-label="细分曲面"><svg><use href="#s-subdiv"/></svg></button>
                        <button class="tool more" aria-label="克隆"><svg><use href="#s-cloner"/></svg></button>
                        <button class="tool more" aria-label="效果器"><svg><use href="#s-fields"/></svg></button>
                    </div>
                    <div class="group near">
                        <button class="tool more" aria-label="弯曲"><svg><use href="#s-bend"/></svg></button>
                        <button class="tool more" aria-label="域"><svg><use href="#s-axcube"/></svg></button>
                    </div>
                    <div class="group near"><button class="tool more" aria-label="对称"><svg><use href="#s-sym"/></svg></button></div>
                    <div class="group">
                        <button class="tool more" aria-label="天空"><svg><use href="#s-globe"/></svg></button>
                        <button class="tool more" aria-label="摄像机"><svg><use href="#s-camera"/></svg></button>
                        <button class="tool more" aria-label="灯光"><svg><use href="#s-light"/></svg></button>
                    </div>
                    <div class="group far"><button class="tool more" aria-label="转为可编辑"><svg><use href="#s-edit"/></svg></button></div>
                </aside>
            </div>
        </div>

        <div class="panels">
            <section class="panel objects">
                <div class="panel-tabs"><button class="active">对象</button><button>场次</button></div>
                <div class="panel-menu">
                    <svg class="ico"><use href="#p-burger"/></svg>
                    <button>文件</button>
                    <button>编辑</button>
                    <button>查看</button>
                    <button>对象</button>
                    <button>标签</button>
                    <button>书签</button>
                    <div class="icons">
                        <svg class="ico"><use href="#p-search"/></svg>
                        <svg class="ico"><use href="#p-home"/></svg>
                        <svg class="ico"><use href="#p-filter"/></svg>
                        <svg class="ico"><use href="#p-ext"/></svg>
                    </div>
                </div>
                <ul class="tree">
                    <li><span class="branch"></span><svg class="ico"><use href="#cube"/></svg><span class="name">立方体.2</span><svg class="layer"><use href="#p-layer"/></svg><span class="dots"></span><svg class="check"><use href="#p-check"/></svg><svg class="tag"><use href="#p-tag"/></svg></li>
                    <li><span class="branch"></span><svg class="ico"><use href="#cube"/></svg><span class="name">立方体.1</span><svg class="layer"><use href="#p-layer"/></svg><span class="dots"></span><svg class="check"><use href="#p-check"/></svg><svg class="tag"><use href="#p-tag"/></svg></li>
                    <li class="selected"><span class="branch"></span><svg class="ico"><use href="#cube"/></svg><span class="name">立方体</span><svg class="layer"><use href="#p-layer"/></svg><span class="dots"></span><svg class="check"><use href="#p-check"/></svg><svg class="tag"><use href="#p-tag"/></svg></li>
                </ul>
                <div class="tree-rest"></div>
            </section>

            <section class="panel attrs">
                <div class="panel-tabs"><button class="active">属性</button><button>层</button></div>
                <div class="panel-menu">
                    <svg class="ico"><use href="#p-burger"/></svg>
                    <button>模式</button>
                    <button>编辑</button>
                    <button>用户数据</button>
                    <div class="icons">
                        <svg class="ico"><use href="#p-left"/></svg>
                        <svg class="ico off"><use href="#p-right"/></svg>
                        <svg class="ico"><use href="#p-up"/></svg>
                        <svg class="ico"><use href="#p-search"/></svg>
                        <svg class="ico"><use href="#p-filter"/></svg>
                        <svg class="ico"><use href="#p-lock"/></svg>
                        <svg class="ico"><use href="#p-target"/></svg>
                        <svg class="ico"><use href="#p-ext"/></svg>
                    </div>
                </div>
                <div class="attr-body">
                    <div class="attr-head">
                        <svg class="cube"><use href="#cube"/></svg>
                        <span>立方体对象 [立方体]</span>
                        <div class="preset"><select aria-label="预设"><option>默认</option></select></div>
                    </div>
                    <div class="attr-tabs">
                        <button>基本</button>
                        <button>坐标</button>
                        <button class="active">对象</button>
                        <button><svg><use href="#p-phong"/></svg>平滑着色(Phong)</button>
                    </div>
                    <h2>对象属性</h2>
                    <div class="row"><svg class="key"><use href="#p-diamond"/></svg><label for="sx">尺寸 . X</label><input id="sx" class="field" type="text" value="200 cm"></div>
                    <div class="row"><svg class="key"><use href="#p-diamond"/></svg><label for="sy">尺寸 . Y</label><input id="sy" class="field" type="text" value="200 cm"></div>
                    <div class="row"><svg class="key"><use href="#p-diamond"/></svg><label for="sz">尺寸 . Z</label><input id="sz" class="field" type="text" value="200 cm"></div>
                    <div class="row"><svg class="key"><use href="#p-diamond"/></svg><label for="gx">分段 X</label><input id="gx" class="field" type="text" value="1"><input class="slider" type="range" min="1" max="100" value="1" aria-label="分段 X"></div>
                    <div class="row"><svg class="key"><use href="#p-diamond"/></svg><label for="gy">分段 Y</label><input id="gy" class="field" type="text" value="1"><input class="slider" type="range" min="1" max="100" value="1" aria-label="分段 Y"></div>
                    <div class="row"><svg class="key"><use href="#p-diamond"/></svg><label for="gz">分段 Z</label><input id="gz" class="field" type="text" value="1"><input class="slider" type="range" min="1" max="100" value="1" aria-label="分段 Z"></div>
                    <div class="checks">
                        <div class="row"><svg class="key"><use href="#p-diamond"/></svg><label for="sep">分离表面</label><input id="sep" type="checkbox" class="box"></div>
                        <div class="row"><svg class="key"><use href="#p-diamond"/></svg><label for="fil">圆角</label><input id="fil" type="checkbox" class="box"></div>
                    </div>
                    <div class="row disabled"><svg class="key"><use href="#p-diamond"/></svg><label for="fr">圆角半径</label><input id="fr" class="field" type="text" value="3 cm" disabled><input class="slider" type="range" value="15" style="--fill: 15%" aria-label="圆角半径" disabled></div>
                    <div class="row disabled"><svg class="key"><use href="#p-diamond"/></svg><label for="fs">圆角细分</label><input id="fs" class="field" type="text" value="3" disabled><input class="slider" type="range" value="22" style="--fill: 22%" aria-label="圆角细分" disabled></div>
                </div>
            </section>
        </div>
    </main>

    <footer class="status">
        <svg class="ico"><use href="#p-burger"/></svg>
        <svg class="ico"><use href="#p-ok"/></svg>
        <span>移动：点击并拖动鼠标移动元素。按住 SHIFT 键量化移动；节点编辑模式时按住 SHIFT 键增加选择对象；按住 CTRL 键减少选择对象。</span>
    </footer>

    <!-- floating network monitor -->
    <div class="netmon">
        <span class="led"></span>
        <span class="meter"></span>
        <div class="rate"><b>0.2</b><span><svg class="arrow up" viewBox="0 0 6 7"><path d="M3 7V1M.5 3.500 3 1 5.500 3.500" fill="none" stroke="currentColor" stroke-width="1.400"/></svg>K/s</span></div>
        <div class="rate"><b>1.4</b><span><svg class="arrow down" viewBox="0 0 6 7"><path d="M3 0V6M.5 3.500 3 6 5.500 3.500" fill="none" stroke="currentColor" stroke-width="1.400"/></svg>K/s</span></div>
    </div>

    <div class="watermark">
        <span class="wm-main">itk3</span>
        <span class="wm-side"><span class="wm-cn">一堂课</span><span class="wm-com">.com</span></span>
    </div>

    <script src="script.js"></script>
</body>
</html>
```
FILE: styles.css
```css
:root {
    --bg: #2b2b2b;
    --dark: #1c1c1c;
    --btn: #3e3e3e;
    --line: #1f1f1f;
    --icon: #b0b0b0;
    --text: #a3a3a3;
    --bright: #e6e6e6;
    --accent: #55599c;
    --yellow: #dede85;
}

* {
    box-sizing: border-box;
}

body {
    margin: 0;
    height: 100vh;
    display: flex;
    flex-direction: column;
    overflow: hidden;
    background: var(--bg);
    color: var(--text);
    font: 11px/16px "Noto Sans", "Noto Sans CJK SC", sans-serif;
}

button, input, select {
    font: inherit;
    color: inherit;
    margin: 0;
    padding: 0;
    border: 0;
    background: none;
}

svg {
    display: block;
    flex: none;
}

.sprite {
    position: absolute;
    width: 0;
    height: 0;
}

.ico {
    width: 14px;
    height: 14px;
    color: #979797;
}

.ico.off {
    color: #505050;
}

/* title bar */
.titlebar {
    display: flex;
    align-items: center;
    height: 23px;
    padding: 0 1px 0 2px;
    background: #f2f3f5;
    color: #111;
}

.app-icon {
    width: 16px;
    height: 16px;
}

.app-title {
    margin: 0 auto 0 6px;
    font-size: 12px;
    font-weight: 400;
}

.window-controls {
    display: flex;
}

.window-controls button {
    width: 46px;
    height: 22px;
    display: grid;
    place-items: center;
}

.window-controls svg {
    width: 10px;
    height: 10px;
}

/* document tabs + layouts */
.docbar {
    display: flex;
    align-items: center;
    height: 25px;
    padding: 0 8px;
    background: var(--dark);
}

.history {
    margin-right: 9px;
    color: #a8a8a8;
}

.history svg {
    width: 16px;
    height: 12px;
}

.history.redo {
    transform: scaleX(-1);
    color: #4d4d4d;
    margin-right: 9px;
}

.doc-tab {
    align-self: flex-end;
    display: flex;
    align-items: center;
    justify-content: space-between;
    width: 87px;
    height: 22px;
    padding: 0 8px 1px 7px;
    background: var(--bg);
    color: var(--bright);
}

.tab-close svg {
    width: 8px;
    height: 8px;
}

.plus {
    margin-left: 10px;
    color: #c8c8c8;
}

.plus.dim {
    margin: 0 18px 0 0;
    color: #a0a0a0;
}

.plus svg {
    width: 10px;
    height: 10px;
}

.layouts {
    display: flex;
    align-self: stretch;
    gap: 29px;
    margin: 0 35px 0 auto;
}

.layouts button {
    padding: 2px 7px 0;
    color: #8c8c8c;
    border-bottom: 3px solid transparent;
}

.layouts .active {
    color: var(--bright);
    border-color: #6b6fbb;
}

.new-ui {
    display: flex;
    align-items: center;
    gap: 16px;
    padding-left: 14px;
    border-left: 1px solid #d0d0d0;
    color: var(--bright);
    line-height: 15px;
}

.switch {
    appearance: none;
    width: 18px;
    height: 10px;
    border-radius: 5px;
    background: radial-gradient(circle at 13px 5px, #1c1c1c 3px, #fff 4px);
}

/* main menu */
.menubar {
    display: flex;
    align-items: center;
    gap: 14px;
    height: 28px;
    padding: 0 8px;
}

.menubar .hl {
    color: var(--yellow);
}

/* shared tool buttons */
.group {
    display: flex;
    flex: none;
    border-radius: 4px;
    background: var(--btn);
    overflow: hidden;
}

.tool {
    position: relative;
    width: 28px;
    height: 28px;
    color: var(--icon);
}

.tool svg {
    width: 100%;
    height: 100%;
}

.tool + .tool {
    border-left: 1px solid #303030;
}

.tool.on {
    background: var(--accent);
    color: #bdbdbd;
}

.more::after {
    content: "";
    position: absolute;
    right: 1px;
    bottom: 1px;
    border: 2px solid #9a9a9a;
    border-top-color: transparent;
    border-left-color: transparent;
}

.more.warm::after {
    border-right-color: var(--yellow);
    border-bottom-color: var(--yellow);
}

.grip-h {
    width: 28px;
    height: 5px;
    align-self: flex-start;
    margin-top: 2px;
    background: radial-gradient(circle, #606060 0.5px, transparent 1px) 0 0 / 3px 3px;
}

.grip-v {
    width: 5px;
    height: 20px;
    background: radial-gradient(circle, #606060 0.5px, transparent 1px) 0 0 / 3px 3px;
}

/* layout */
.main {
    display: flex;
    flex: 1;
    min-height: 0;
}

.work {
    display: flex;
    flex-direction: column;
    flex: 1;
    min-width: 0;
}

.toolbar {
    display: flex;
    align-items: center;
    height: 29px;
    padding: 0 5px 0 4px;
}

.toolbar > .grip-v {
    margin: 0 2px 0 6px;
}

.toolbar-part {
    display: flex;
    gap: 10px;
}

.toolbar-part.mid {
    margin: 0 auto;
}

.toolbar-part.end {
    margin-right: 9px;
}

.toolbar-part .near {
    margin-left: -6px;
}

.toolbar-part .far {
    margin-left: 10px;
}

.axis {
    display: flex;
    flex-direction: column;
    align-items: center;
    font-size: 14px;
    line-height: 20px;
}

.axis::before {
    content: "";
    order: 1;
    width: 14px;
    height: 2px;
}

.axis.x::before { background: #e05555; }
.axis.y::before { background: #5fd977; }
.axis.z::before { background: #2a86d8; }

.stage {
    display: flex;
    flex: 1;
    min-height: 0;
}

.side-tools {
    display: flex;
    flex-direction: column;
    gap: 10px;
    width: 38px;
    padding-right: 2px;
}

.side-tools.right {
    width: 39px;
    padding: 0 1px 0 2px;
}

.side-tools .group {
    flex-direction: column;
}

.side-tools .tool {
    width: 36px;
    height: 36px;
}

.side-tools .tool + .tool {
    border-left: 0;
    border-top: 1px solid #303030;
}

.side-tools .near {
    margin-top: -6px;
}

.side-tools .far {
    margin-top: 10px;
}

.side-tools .more::after {
    border-width: 3px;
}

.center {
    display: flex;
    flex-direction: column;
    flex: 1;
    min-width: 0;
}

.view-menu,
.panel-menu {
    display: flex;
    align-items: center;
    gap: 14px;
}

.view-menu > .ico,
.panel-menu > .ico {
    margin-right: -4px;
}

.view-menu {
    height: 24px;
    margin-right: 2px;
    padding: 0 3px 1px 6px;
    border-top: 1px solid var(--line);
}

.icons {
    display: flex;
    gap: 6px;
    margin-left: auto;
}

.viewport {
    flex: 1;
    margin-right: 2px;
    border: 1px solid #6e6e6e;
}

/* timeline */
.grip-wide {
    height: 5px;
    margin: 2px 2px 3px;
    background: radial-gradient(circle, #606060 0.5px, transparent 1px) 0 0 / 3px 3px;
}

.transport {
    display: flex;
    align-items: center;
    height: 28px;
    padding-right: 3px;
}

.transport .grip-v {
    margin-right: 2px;
}

.transport-mid {
    display: flex;
    align-items: center;
    gap: 10px;
    margin: 0 auto;
}

.field {
    width: 78px;
    height: 18px;
    padding-bottom: 1px;
    border-radius: 3px;
    background: var(--dark);
    color: #d4d4d4;
    text-align: center;
}

.field.now {
    margin: 0 1px;
}

.frames {
    display: flex;
    height: 47px;
}

.frames .grip-v {
    height: 38px;
    margin: 4px 3px 0 0;
}

.frames-body {
    flex: 1;
}

.ruler {
    display: flex;
    justify-content: space-between;
    height: 26px;
    padding: 1px 6px 0 6px;
    background: linear-gradient(#383838, #383838) 0 17px / 100% 1px no-repeat;
}

.tick {
    position: relative;
    display: flex;
    justify-content: center;
    width: 0;
}

.tick::after {
    content: "";
    position: absolute;
    top: 19px;
    width: 1px;
    height: 2px;
    background: #a0a0a0;
}

.tick.major::after {
    height: 3px;
}

.tick.long::after {
    top: 1px;
    height: 21px;
    background: #909090;
}

.tick span {
    line-height: 13px;
}

.tick.current {
    justify-content: flex-start;
}

.tick.current span {
    margin-left: 6px;
    color: #6b6fbb;
}

.tick.current::before {
    content: "";
    position: absolute;
    left: -4px;
    top: 0;
    width: 9px;
    height: 16px;
    background: #6b6fbb;
}

.tick.current::after {
    top: 16px;
    height: 6px;
}

.range {
    display: flex;
    gap: 7px;
}

.range-bar {
    display: flex;
    flex: 1;
    align-items: center;
    gap: 6px;
    height: 18px;
    padding: 0 4px 1px;
    border-radius: 3px;
    background: #3d3d3d;
    color: #bdbdbd;
}

.range-bar i {
    width: 5px;
    height: 10px;
    border: solid #5a5a5a;
    border-width: 0 1px;
}

.range-bar .last {
    margin-left: auto;
}

/* right panels */
.panels {
    display: flex;
    flex-direction: column;
    flex: 0 0 447px;
    padding-top: 2px;
    border-left: 1px solid var(--line);
}

.panel {
    display: flex;
    flex-direction: column;
}

.objects {
    height: 434px;
    border-bottom: 1px solid var(--line);
}

.panel-tabs {
    display: flex;
    height: 22px;
    background: var(--dark);
}

.panel-tabs button {
    padding: 0 12px 2px;
    color: #8c8c8c;
}

.panel-tabs .active {
    background: var(--bg);
    color: var(--bright);
}

.panel-menu {
    height: 23px;
    padding: 0 3px 1px 6px;
    border-bottom: 1px solid var(--line);
}

.tree {
    margin: 0;
    padding: 1px 0 0;
    list-style: none;
}

.tree li {
    display: flex;
    align-items: center;
    height: 20px;
    background: #222;
}

.tree li:nth-child(2) {
    background: var(--bg);
}

.tree .branch {
    width: 9px;
    height: 20px;
    margin: 0 0 0 8px;
    border-left: 1px solid #505050;
    background: linear-gradient(#505050, #505050) 0 10px / 9px 1px no-repeat;
}

.tree li:last-child .branch {
    height: 11px;
    align-self: flex-start;
}

.tree .name {
    width: 53px;
    margin: 0 0 0 5px;
}

.tree .selected .name {
    color: #f9bb34;
}

.layer {
    width: 10px;
    height: 10px;
}

.dots {
    width: 6px;
    height: 16px;
    margin: 0 4px 0 6px;
    background: radial-gradient(circle at 3px 4px, #636363 2.5px, transparent 3px) 0 0 / 6px 8px;
}

.check {
    width: 12px;
    height: 10px;
}

.tag {
    width: 12px;
    height: 12px;
    margin: 0 0 3px 10px;
}

.tree-rest {
    flex: 1;
    width: 133px;
    border-right: 1px solid var(--line);
}

.attrs {
    flex: 1;
    margin-top: 2px;
    border-top: 1px solid var(--line);
}

.attr-body {
    padding: 5px 7px 0 8px;
    flex: 1;
}

.attr-head {
    display: flex;
    align-items: center;
    gap: 7px;
    height: 18px;
}

.attr-head .cube {
    width: 16px;
    height: 16px;
    margin-left: 1px;
}

.preset {
    position: relative;
    width: 89px;
    height: 18px;
    margin-left: auto;
}

.preset select {
    appearance: none;
    width: 100%;
    height: 100%;
    padding: 0 0 1px 7px;
    border-radius: 8px 4px 4px 8px;
    background: linear-gradient(#2b2b2b, #2b2b2b) 69px 0 / 1px 100% no-repeat #3d3d3d;
    color: #b5b5b5;
}

.preset::after {
    content: "";
    position: absolute;
    right: 7px;
    top: 8px;
    border: 3px solid transparent;
    border-top-color: #b0b0b0;
    pointer-events: none;
}

.attr-tabs {
    display: flex;
    gap: 4px;
    margin: 6px 0 7px;
}

.attr-tabs button {
    display: flex;
    align-items: center;
    gap: 4px;
    height: 19px;
    padding: 0 9px;
    border-radius: 4px;
    background: var(--btn);
}

.attr-tabs .active {
    background: var(--accent);
    color: #fff;
}

.attr-tabs svg {
    width: 10px;
    height: 11px;
}

.attr-body h2 {
    margin: 0 0 6px;
    font-size: 12px;
    font-weight: 400;
    color: #f0f0f0;
}

.row {
    display: flex;
    align-items: center;
    height: 18px;
    margin-bottom: 4px;
}

.key {
    width: 10px;
    height: 10px;
    margin: 0 10px 0 2px;
    color: #9a9a9a;
}

.row label {
    width: 49px;
    white-space: nowrap;
}

.slider {
    appearance: none;
    flex: 1;
    height: 12px;
    margin-left: 4px;
    --fill: 0%;
}

.slider::-webkit-slider-runnable-track {
    height: 4px;
    border-radius: 2px;
    background: linear-gradient(to right, #33366b var(--fill), var(--dark) var(--fill));
}

.slider::-webkit-slider-thumb {
    appearance: none;
    width: 4px;
    height: 12px;
    margin-top: -4px;
    border-radius: 2px;
    background: #b0b0b0;
}

.slider:disabled::-webkit-slider-thumb {
    visibility: hidden;
}

.checks {
    padding-top: 7px;
}

.checks .row {
    margin-bottom: 2px;
}

.box {
    appearance: none;
    width: 12px;
    height: 12px;
    border: 1px solid #8f8f8f;
    border-radius: 2px;
}

.row.disabled label {
    color: #606060;
}

.row.disabled .key {
    color: #444;
}

.row.disabled .field {
    background: #262626;
    color: #6a6a6a;
}

.row.disabled .slider {
    opacity: 0.6;
}

/* status bar */
.status {
    display: flex;
    align-items: center;
    gap: 10px;
    height: 24px;
    padding: 2px 0 0 5px;
    background: var(--dark);
    border-bottom: 1px solid #d8d4d8;
}

/* floating widgets */
.netmon {
    position: absolute;
    right: 0;
    top: 728px;
    width: 32px;
    height: 142px;
    display: flex;
    flex-direction: column;
    align-items: center;
    background: rgba(41, 42, 46, 0.7);
    border-radius: 6px 0 0 6px;
    color: #eee;
}

.led {
    width: 11px;
    height: 11px;
    margin: 12px 0 11px;
    border-radius: 50%;
    background: #0cbc6b;
}

.meter {
    width: 26px;
    height: 45px;
    border: solid #3d3e42;
    border-width: 1px 0;
    margin-bottom: 5px;
    display: flex;
    justify-content: center;
    align-items: center;
}

.meter::before {
    content: "";
    width: 10px;
    height: 30px;
    border-radius: 5px;
    background: linear-gradient(#444 56%, #b4cc50 56%, #b4cc50 70%, #5ad27c 70%, #3fbfa0);
}

.rate {
    display: flex;
    flex-direction: column;
    align-items: center;
    height: 27px;
}

.rate b {
    font-weight: 400;
    line-height: 15px;
}

.rate span {
    display: flex;
    align-items: center;
    gap: 3px;
    font-size: 10px;
    line-height: 9px;
    color: #aaa;
}

.arrow {
    width: 6px;
    height: 7px;
}

.arrow.up { color: #2a9bf0; }
.arrow.down { color: #0cbc6b; }

.watermark {
    position: absolute;
    right: 21px;
    bottom: 0;
    display: flex;
    align-items: flex-end;
    color: #2563d6;
    font-family: Roboto, "Noto Sans CJK SC", sans-serif;
    font-style: italic;
    font-weight: 500;
}

.wm-main {
    font-size: 62px;
    line-height: 46px;
}

.wm-side {
    display: flex;
    flex-direction: column;
    align-items: flex-end;
}

.wm-cn {
    margin-bottom: -6px;
    font-family: "Noto Sans CJK SC", sans-serif;
    font-style: normal;
    font-size: 25px;
    line-height: 22px;
}

.wm-com {
    font-size: 38px;
    line-height: 30px;
}
```
FILE: script.js
```javascript
// timeline ruler: one tick per frame, a label every five frames
const FRAMES = 90;
const ruler = document.getElementById('ruler');

for (let f = 0; f <= FRAMES; f++) {
    const tick = document.createElement('div');
    tick.className = 'tick';

    if (f % 5 === 0) {
        tick.classList.add('major');
        const label = document.createElement('span');
        label.textContent = f;
        tick.appendChild(label);
    }
    if (f % 30 === 0 && f > 0) tick.classList.add('long');
    if (f === 0) tick.classList.add('current');

    ruler.appendChild(tick);
}
```
